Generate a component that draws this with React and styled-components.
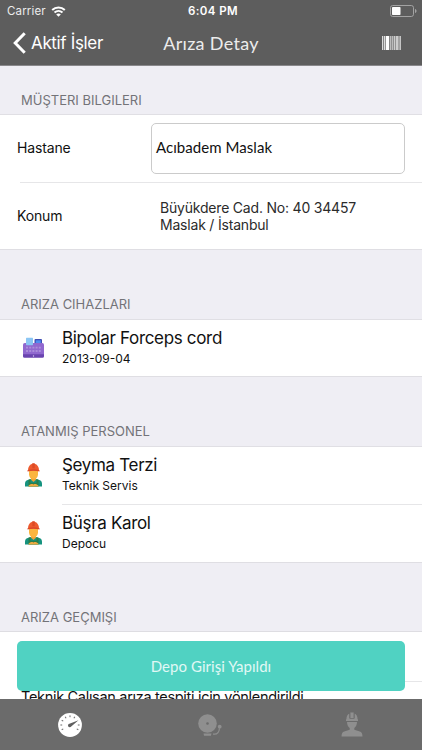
import React from "react";
import styled, { createGlobalStyle } from "styled-components";

const GlobalStyle = createGlobalStyle`
  * {
    box-sizing: border-box;
  }
  body {
    margin: 0;
    background: #efeef4;
    font-family: Inter, "Noto Sans", sans-serif;
    color: #111;
  }
`;

const Screen = styled("div")`
  display: flex;
  flex-direction: column;
  position: relative;
  width: 422px;
  height: 750px;
  overflow: hidden;
  background: #efeef4;
  white-space: nowrap;
`;

const Header = styled("header")`
  flex: none;
  height: 66px;
  background: #5d5d5d;
  border-bottom: 1px solid #89888b;
  color: #fff;
`;

const StatusBar = styled("div")`
  display: grid;
  grid-template-columns: 1fr auto 1fr;
  align-items: center;
  height: 22px;
  padding: 0 5px 0 7px;
  font-size: 11.5px;
  line-height: 22px;
`;

const Carrier = styled("div")`
  display: flex;
  align-items: center;
  gap: 5px;
  color: #ececec;
  letter-spacing: 0.15px;
`;

const Clock = styled("div")`
  padding-left: 2px;
  font-weight: 600;
  letter-spacing: 0.4px;
`;

const BatteryBox = styled("div")`
  display: flex;
  justify-content: flex-end;
`;

const NavBar = styled("div")`
  display: grid;
  grid-template-columns: 1fr auto 1fr;
  align-items: center;
  height: 42px;
  padding: 0 21px 0 13px;
`;

const BackButton = styled("div")`
  display: flex;
  align-items: center;
  gap: 5px;
  font-size: 17px;
  letter-spacing: -0.35px;
`;

const Title = styled("div")`
  padding-left: 8px;
  font-family: Lato, sans-serif;
  font-size: 18px;
  letter-spacing: 0.3px;
  color: #ececec;
`;

const NavAction = styled("div")`
  display: flex;
  justify-content: flex-end;
`;

const SectionTitle = styled("div")`
  flex: none;
  display: flex;
  align-items: flex-end;
  height: ${(props) => props.$height}px;
  padding: 0 21px ${(props) => props.$bottom || 7}px;
  font-size: 13px;
  line-height: 16px;
  letter-spacing: 0;
  color: #737378;
`;

const Group = styled("div")`
  flex: none;
  height: ${(props) => props.$height}px;
  background: #fff;
  border-top: 1px solid #e0dfe4;
  border-bottom: 1px solid #dfdee3;
`;

const FieldRow = styled("div")`
  display: flex;
  align-items: center;
  height: 67px;
  padding: 0 17px;
`;

const Label = styled("div")`
  width: 134px;
  padding-bottom: 2px;
  font-size: 14px;
  letter-spacing: -0.15px;
`;

const Input = styled("div")`
  flex: 1;
  height: 51px;
  padding: 0 4px;
  border: 1px solid #cbcbcb;
  border-radius: 5px;
  font-family: Lato, sans-serif;
  font-size: 15px;
  line-height: 47px;
  letter-spacing: 0.05px;
`;

const Address = styled("div")`
  padding: 0 0 2px 9px;
  font-size: 14px;
  line-height: 17px;
  letter-spacing: -0.2px;
  color: #2b2b2b;
`;

const Divider = styled("div")`
  height: 1px;
  margin-left: ${(props) => props.$inset}px;
  background: #e6e6e8;
`;

const ItemRow = styled("div")`
  display: flex;
  align-items: center;
  height: 57px;
  padding: 0 0 2px 22px;
  gap: 17px;

  svg {
    flex: none;
  }
`;

const ItemText = styled("div")`
  padding-bottom: 1px;
`;

const ItemTitle = styled("div")`
  font-size: 17px;
  line-height: 22px;
  letter-spacing: -0.33px;
`;

const ItemDetail = styled("div")`
  padding-top: 1px;
  font-size: 12px;
  line-height: 17px;
`;

const History = styled("div")`
  flex: 1;
  border-top: 1px solid #dedde2;
  background: #fff;
`;

const HistoryRow = styled("div")`
  height: 49px;
`;

const HistoryText = styled("div")`
  padding: 5px 21px 0;
  font-size: 14.5px;
  line-height: 20px;
  letter-spacing: -0.31px;
`;

const ActionButton = styled("button")`
  position: absolute;
  left: 17px;
  right: 17px;
  bottom: 59px;
  height: 50px;
  padding: 0;
  border: 0;
  border-radius: 5px;
  background: #50d2c2;
  color: #e0f8f5;
  font-family: Lato, sans-serif;
  font-size: 15px;
  letter-spacing: 0.05px;
`;

const TabBar = styled("nav")`
  position: absolute;
  left: 0;
  right: 0;
  bottom: 0;
  display: grid;
  grid-template-columns: repeat(3, 1fr);
  height: 51px;
  background: #6b6b6b;
`;

const Tab = styled("div")`
  display: flex;
  align-items: center;
  justify-content: center;
  color: ${(props) => (props.$active ? "#fff" : "#8f8f8f")};
`;

function WifiIcon() {
  return (
    <svg width="15" height="11" viewBox="0 0 14 11" fill="none" stroke="#fff">
      <path d="M.7 4C4.200.6 9.800.6 13.300 4" strokeWidth="2" />
      <path d="M3 6.500c2.300-2.100 5.700-2.100 8 0" strokeWidth="1.900" />
      <path d="M7 10.800 4.700 8.400c1.300-1.200 3.300-1.200 4.600 0z" fill="#fff" stroke="none" />
    </svg>
  );
}

function BatteryIcon() {
  return (
    <svg width="27" height="12" viewBox="0 0 27 12">
      <rect x=".5" y=".5" width="23" height="11" rx="2.2" fill="none" stroke="#a3a3a3" />
      <rect x="2" y="2" width="8.5" height="8" rx=".7" fill="#fff" />
      <path d="M25 4c2 .6 2 3.400 0 4z" fill="#a3a3a3" />
    </svg>
  );
}

function BarcodeIcon() {
  const bars = [
    [0, 1, "#ddd"],
    [2, 1.2, "#ddd"],
    [4, 3, "#fff"],
    [8, 1.2, "#bbb"],
    [10, 1.2, "#bbb"],
    [12, 1.2, "#ccc"],
    [14, 2, "#ccc"],
    [16.6, 0.8, "#ccc"],
    [18, 0.9, "#ccc"],
  ];
  return (
    <svg width="19" height="14" viewBox="0 0 19 14">
      <rect width="19" height="14" fill="#858585" />
      {bars.map(([x, width, fill]) => (
        <rect key={x} x={x} width={width} height="14" fill={fill} />
      ))}
    </svg>
  );
}

function DeviceIcon() {
  return (
    <svg width="23" height="22" viewBox="0 0 23 22">
      <rect x="12.5" y="2" width="7.5" height="7" rx="1" fill="#3d4eb4" />
      <rect x="13.8" y="3.3" width="5" height="2.7" fill="#4f8cf0" />
      <rect x="1" y="6" width="21" height="14" rx="1.8" fill="#9068cf" />
      <rect x="4" y=".8" width="7" height="7.4" rx=".6" fill="#8bc6f4" />
      <path d="M4 10.700h15M4 14h15" stroke="#ab8edb" strokeWidth="1.8" strokeDasharray="2 1.2" />
      <path d="M1 17.300h21v1.900a1.600 1.600 0 0 1-1.600 1.600H2.600A1.600 1.600 0 0 1 1 19.200z" fill="#6a44b0" />
      <circle cx="11.5" cy="19" r=".7" fill="#d6c8ee" />
    </svg>
  );
}

function WorkerIcon() {
  return (
    <svg width="23" height="24" viewBox="0 0 23 24">
      <path d="M3 23.500v-2.800c0-2 .9-3.300 2.700-3.800l3.300-1h5l3.300 1c1.800.5 2.700 1.800 2.700 3.800v2.800z" fill="#15937f" />
      <path d="M6.500 16.800 8.500 16v3.700h6V16l2 .8v6.700h-10z" fill="#2c7d4a" />
      <path d="M9 12.500h5v4.300l-2.500 2.200L9 16.800z" fill="#efa238" />
      <path d="M6.500 22.700c1.500-1.600 3.500-2 5-1.200 1.500-.8 3.500-.4 5 1.200l-.3.800H6.800z" fill="#efaa40" />
      <path d="M7 7.500h9v3.800c0 2.900-2.100 5.200-4.500 5.200S7 14.200 7 11.300z" fill="#fbb540" />
      <path d="M6 7.800C6 3.500 8.100.8 11.500.8S17 3.500 17 7.800z" fill="#ed5a2f" />
      <path d="M10.300.3h2.400v5h-2.400z" fill="#dd4a25" />
      <path d="M5.500 7.200c3.500-1.300 8.500-1.300 12 0v1.300c-3.500-.9-8.500-.9-12 0z" fill="#dc4827" />
    </svg>
  );
}

function GaugeIcon() {
  const ticks = [-120, -90, -60, -30, 0, 30, 90, 120];
  return (
    <svg width="24" height="24" viewBox="0 0 24 24">
      <circle cx="12" cy="12" r="11.9" fill="currentColor" />
      {ticks.map((angle) => (
        <path key={angle} d="M12 2.400v1.800" stroke="#6b6b6b" strokeWidth="1" transform={`rotate(${angle} 12 12)`} />
      ))}
      <path d="m20.500 7.300-7.300 6.300a1.800 1.800 0 1 1-1.800-2.900z" fill="#606060" />
    </svg>
  );
}

function BellIcon() {
  return (
    <svg width="25" height="24" viewBox="0 0 25 24">
      <circle cx="9.5" cy="10.5" r="9.3" fill="currentColor" />
      <circle cx="9.5" cy="10.5" r="1.3" fill="#6b6b6b" />
      <path d="M5.500 20.500h8l-.6 2.300H6.100z" fill="currentColor" />
      <path d="M15 21.200h1.500c2.700 0 4.600-2 5-6" fill="none" stroke="currentColor" strokeWidth="1.2" />
      <circle cx="21.7" cy="13.7" r="1.9" fill="currentColor" />
    </svg>
  );
}

function HelmetIcon() {
  return (
    <svg width="22" height="25" viewBox="0 0 22 25" fill="currentColor">
      <path d="M9.300.5h3.400V6H9.300zM8.600 1.500V6.700h4.800V1.500c2 .7 3.200 2.800 3.200 5.700l.4.400v1.300H5V7.600l.4-.4c0-2.900 1.200-5 3.200-5.700z" />
      <path d="M8.700 1v5.200M13.300 1v5.200" stroke="#6b6b6b" strokeWidth=".7" />
      <path d="M6 10h10c-.1 2.900-1.200 4.800-2.700 6v1.800l5.500 1.700c1.700.6 2.600 2 2.700 4.900H.5c.1-2.900 1-4.300 2.700-4.900l5.500-1.700V16C7.200 14.800 6.100 12.900 6 10z" />
    </svg>
  );
}

const personnel = [
  { name: "Şeyma Terzi", role: "Teknik Servis" },
  { name: "Büşra Karol", role: "Depocu" },
];

export default function App() {
  return (
    <Screen>
      <GlobalStyle />
      <Header>
        <StatusBar>
          <Carrier>
            Carrier <WifiIcon />
          </Carrier>
          <Clock>6:04 PM</Clock>
          <BatteryBox>
            <BatteryIcon />
          </BatteryBox>
        </StatusBar>
        <NavBar>
          <BackButton>
            <svg width="13" height="22" viewBox="0 0 13 22" fill="none" stroke="#fff" strokeWidth="3">
              <path d="M11.700 1.200 2.200 11l9.500 9.800" />
            </svg>
            Aktif İşler
          </BackButton>
          <Title>Arıza Detay</Title>
          <NavAction>
            <BarcodeIcon />
          </NavAction>
        </NavBar>
      </Header>

      <SectionTitle $height={48} $bottom={6}>
        MÜŞTERI BILGILERI
      </SectionTitle>
      <Group $height={136}>
        <FieldRow>
          <Label>Hastane</Label>
          <Input>Acıbadem Maslak</Input>
        </FieldRow>
        <Divider $inset={20} />
        <FieldRow>
          <Label>Konum</Label>
          <Address>
            Büyükdere Cad. No: 40 34457
            <br />
            Maslak / İstanbul
          </Address>
        </FieldRow>
      </Group>

      <SectionTitle $height={69}>ARIZA CIHAZLARI</SectionTitle>
      <Group $height={58}>
        <ItemRow>
          <DeviceIcon />
          <ItemText>
            <ItemTitle>Bipolar Forceps cord</ItemTitle>
            <ItemDetail>2013-09-04</ItemDetail>
          </ItemText>
        </ItemRow>
      </Group>

      <SectionTitle $height={69}>ATANMIŞ PERSONEL</SectionTitle>
      <Group $height={117}>
        {personnel.map((person, index) => (
          <React.Fragment key={person.name}>
            {index > 0 && <Divider $inset={62} />}
            <ItemRow>
              <WorkerIcon />
              <ItemText>
                <ItemTitle>{person.name}</ItemTitle>
                <ItemDetail>{person.role}</ItemDetail>
              </ItemText>
            </ItemRow>
          </React.Fragment>
        ))}
      </Group>

      <SectionTitle $height={68} $bottom={6}>
        ARIZA GEÇMIŞI
      </SectionTitle>
      <History>
        <HistoryRow />
        <Divider $inset={20} />
        <HistoryText>Teknik Çalışan arıza tespiti için yönlendirildi</HistoryText>
      </History>

      <ActionButton>Depo Girişi Yapıldı</ActionButton>
      <TabBar>
        <Tab $active>
          <GaugeIcon />
        </Tab>
        <Tab>
          <BellIcon />
        </Tab>
        <Tab>
          <HelmetIcon />
        </Tab>
      </TabBar>
    </Screen>
  );
}
